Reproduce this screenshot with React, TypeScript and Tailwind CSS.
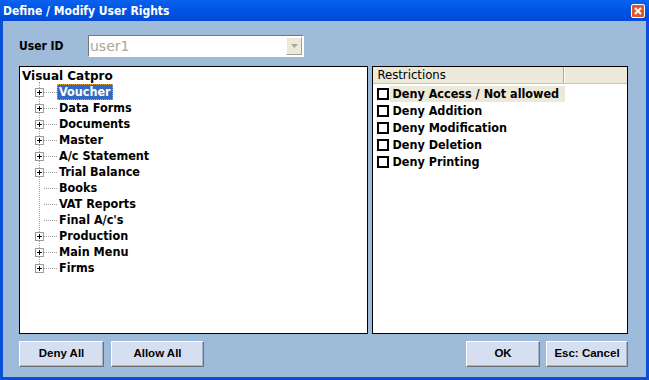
import React from "react";

const font = { fontFamily: '"DejaVu Sans", Tahoma, sans-serif' };
const condFont = { fontFamily: '"DejaVu Sans Condensed", "DejaVu Sans", Tahoma, sans-serif', fontStretch: "condensed" as const };
const btnFont = { fontFamily: '"Liberation Sans", Arial, sans-serif' };

function Plus() {
  return (
    <span className="relative z-10 flex h-[9px] w-[9px] items-center justify-center border border-[#9a9a8e] bg-white">
      <svg width="7" height="7" viewBox="0 0 7 7">
        <path d="M1 3.5h5M3.5 1v5" stroke="#000" strokeWidth="1" shapeRendering="crispEdges" />
      </svg>
    </span>
  );
}

const treeItems: { label: string; plus: boolean; selected?: boolean }[] = [
  { label: "Voucher", plus: true, selected: true },
  { label: "Data Forms", plus: true },
  { label: "Documents", plus: true },
  { label: "Master", plus: true },
  { label: "A/c Statement", plus: true },
  { label: "Trial Balance", plus: true },
  { label: "Books", plus: false },
  { label: "VAT Reports", plus: false },
  { label: "Final A/c's", plus: false },
  { label: "Production", plus: true },
  { label: "Main Menu", plus: true },
  { label: "Firms", plus: true },
];

const restrictions = [
  "Deny Access / Not allowed",
  "Deny Addition",
  "Deny Modification",
  "Deny Deletion",
  "Deny Printing",
];

function XpButton({ label, w }: { label: string; w: string }) {
  return (
    <button
      className={`${w} h-[26px] border border-t-white border-l-white border-r-[#6f6f6f] border-b-[#6f6f6f] bg-[#d6dff0] text-[11.5px] font-bold text-black shadow-[inset_-1px_-1px_0_#a9b3c4]`}
      style={btnFont}
    >
      {label}
    </button>
  );
}

export default function App() {
  return (
    <div className="flex h-[380px] w-[649px] flex-col bg-[#0a4fd8]" style={font}>
      {/* Title bar */}
      <div className="flex h-[21px] items-center justify-between bg-gradient-to-b from-[#0a62ee] via-[#0054e3] to-[#0049d6] pl-[3px] pr-[4px]">
        <span className="text-[12px] font-bold text-white" style={condFont}>Define / Modify User Rights</span>
        <span className="flex h-[14px] w-[14px] items-center justify-center rounded-[2px] border border-white bg-[#e0552c]">
          <svg width="8" height="8" viewBox="0 0 8 8">
            <path d="M1 1l6 6M7 1L1 7" stroke="#fff" strokeWidth="2" />
          </svg>
        </span>
      </div>
      {/* Body */}
      <div className="mx-[3px] mb-[3px] flex flex-1 flex-col bg-[#9ebbd9] pl-[16px] pr-[18px]">
        {/* User ID row */}
        <div className="mt-[14px] flex h-[22px] items-center">
          <span className="w-[69px] text-[12px] font-bold text-black" style={condFont}>User ID</span>
          <div className="flex h-[22px] w-[216px] items-center border border-t-[#7a786c] border-l-[#7a786c] border-r-white border-b-white bg-white">
            <span className="flex-1 pl-[1px] text-[14px] text-[#a7a69a]">user1</span>
            <span className="mr-[1px] flex h-[18px] w-[16px] items-center justify-center border border-t-white border-l-white border-r-[#a4a296] border-b-[#a4a296] bg-[#ece9d8]">
              <svg width="7" height="4" viewBox="0 0 7 4">
                <path d="M0 0h7L3.5 4z" fill="#aca899" />
              </svg>
            </span>
          </div>
        </div>
        {/* Panels */}
        <div className="mt-[9px] flex h-[268px] gap-[4px]">
          {/* Tree */}
          <div className="relative h-full w-[350px] border border-black bg-white pl-[2px] pt-[1px]">
            <div className="h-[16px] text-[12px] font-bold leading-[16px] text-black">Visual Catpro</div>
            <div className="relative">
              <div className="absolute left-[17px] top-[-2px] h-[186px] border-l border-dotted border-[#a0a0a0]" />
              {treeItems.map((it) => (
                <div key={it.label} className="relative flex h-[16px] items-center">
                  <div className="flex w-[35px] items-center">
                    <div className="flex w-[9px] translate-x-[13px] items-center">{it.plus ? <Plus /> : null}</div>
                    <div className="ml-[13px] h-0 w-[13px] border-t border-dotted border-[#a0a0a0]" />
                  </div>
                  <span
                    style={condFont}
                    className={
                      it.selected
                        ? "h-[16px] whitespace-nowrap border border-dotted border-[#e0a040] bg-[#316ac5] px-[1px] text-[12.5px] font-bold leading-[14px] text-white"
                        : "whitespace-nowrap px-[2px] text-[12.5px] font-bold leading-[16px] text-black"
                    }
                  >
                    {it.label}
                  </span>
                </div>
              ))}
            </div>
          </div>
          {/* Restrictions */}
          <div className="h-full w-[256px] border border-black bg-white">
            <div className="flex h-[17px] border-b border-[#c7c5b2] bg-[#ece9d8]">
              <div className="w-[191px] border-r border-[#aca899] pl-[4px] text-[13px] leading-[16px] text-black" style={condFont}>Restrictions</div>
              <div className="flex-1 border-l border-white" />
            </div>
            <div className="pl-[4px] pt-[1px]">
              {restrictions.map((r, i) => (
                <div key={r} className="flex h-[17px] items-center">
                  <span className="h-[12px] w-[12px] border-2 border-black bg-white" />
                  <span
                    style={condFont}
                    className={`ml-[1px] h-[16px] whitespace-nowrap pl-[2px] pr-[2px] text-[12.5px] font-bold leading-[16px] text-black ${
                      i === 0 ? "w-[175px] bg-[#ece9d8]" : ""
                    }`}
                  >
                    {r}
                  </span>
                </div>
              ))}
            </div>
          </div>
        </div>
        {/* Buttons */}
        <div className="mt-[7px] flex items-center">
          <XpButton label="Deny All" w="w-[85px]" />
          <div className="w-[7px]" />
          <XpButton label="Allow All" w="w-[93px]" />
          <div className="flex-1" />
          <XpButton label="OK" w="w-[74px]" />
          <div className="w-[6px]" />
          <XpButton label="Esc: Cancel" w="w-[82px]" />
        </div>
      </div>
    </div>
  );
}
